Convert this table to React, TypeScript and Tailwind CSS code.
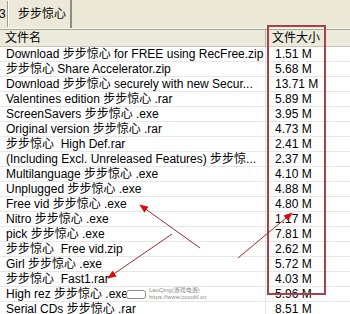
import React from "react";

const rows: [string, string][] = [
  ["Download 步步惊心 for FREE using RecFree.zip", "1.51 M"],
  ["步步惊心 Share Accelerator.zip", "5.68 M"],
  ["Download 步步惊心 securely with new Secur...", "13.71 M"],
  ["Valentines edition 步步惊心 .rar", "5.89 M"],
  ["ScreenSavers 步步惊心 .exe", "3.95 M"],
  ["Original version 步步惊心 .rar", "4.73 M"],
  ["步步惊心  High Def.rar", "2.41 M"],
  ["(Including Excl. Unreleased Features) 步步惊...", "2.37 M"],
  ["Multilanguage 步步惊心 .exe", "4.10 M"],
  ["Unplugged 步步惊心 .exe", "4.88 M"],
  ["Free vid 步步惊心 .exe", "4.80 M"],
  ["Nitro 步步惊心 .exe", "1.17 M"],
  ["pick 步步惊心 .exe", "7.81 M"],
  ["步步惊心  Free vid.zip", "2.62 M"],
  ["Girl 步步惊心 .exe", "5.72 M"],
  ["步步惊心  Fast1.rar", "4.03 M"],
  ["High rez 步步惊心 .exe", "5.96 M"],
  ["Serial CDs 步步惊心 .rar", "8.51 M"],
];

const Arrows: React.FC = () => (
  <svg className="absolute inset-0 pointer-events-none" width={350} height={314}>
    <defs>
      <marker id="head" viewBox="0 0 10 10" refX="9" refY="5" markerWidth="9" markerHeight="9" orient="auto">
        <path d="M0 1 L10 5 L0 9 Z" fill="#e00a0a" />
      </marker>
    </defs>
    <line x1={200} y1={248} x2={140} y2={205} stroke="#9c2a2a" strokeWidth={1} markerEnd="url(#head)" />
    <line x1={238} y1={258} x2={292} y2={213} stroke="#9c2a2a" strokeWidth={1} markerEnd="url(#head)" />
    <line x1={172} y1={234} x2={108} y2={278} stroke="#9c2a2a" strokeWidth={1} markerEnd="url(#head)" />
  </svg>
);

const App: React.FC = () => {
  return (
    <div className="relative w-[350px] h-[314px] overflow-hidden bg-white text-black font-['Liberation_Sans','Noto_Sans_CJK_SC',sans-serif] text-[12px]">
      {/* tab strip */}
      <div className="flex h-[29px] bg-[#ECE9D8] border-b border-[#F7F6F0]">
        <div className="w-[8px] h-[26px] mt-[1px] flex items-center overflow-hidden border-r border-[#9D9D92] text-[12px]">
          <span className="-ml-[1px]">3</span>
        </div>
        <div className="w-[64px] h-[28px] flex items-center pl-[9px] border-l border-white border-r-2 border-r-[#8E8D83] bg-[#ECE9D8]">
          步步惊心
        </div>
      </div>

      {/* column header */}
      <div className="flex h-[18px] bg-[#EBEADB] border-t border-[#A7A69A] border-b border-b-[#C9C6B6] leading-[16px]">
        <div className="w-[266px] pl-[5px] border-r border-[#B9B7A8]">文件名</div>
        <div className="pl-[6px]">文件大小</div>
      </div>

      {/* file rows */}
      <div className="flex flex-col">
        {rows.map(([name, size]) => (
          <div key={name} className="flex h-[15px] border-b border-[#E6E6E6] leading-[14px]">
            <div className="w-[266px] pl-[6px] whitespace-pre overflow-hidden border-r border-[#E6E6E6]">{name}</div>
            <div className="pl-[9px] whitespace-pre">{size}</div>
          </div>
        ))}
      </div>

      {/* red highlight box */}
      <div className="absolute left-[267px] top-[25px] w-[59px] h-[270px] border-2 border-[#A8404A]" />

      {/* watermark */}
      <div className="absolute left-[126px] top-[287px] flex items-center gap-[3px] bg-white/90 pr-[2px]">
        <div className="w-[20px] h-[9px] border border-[#8A8A8A] rounded-[3px]" />
        <div className="flex flex-col text-[6px] leading-[7px] text-[#8C8C8C]">
          <span>LaoQing(游戏电游)</span>
          <span>https://www.cocoltl.cn</span>
        </div>
      </div>

      <Arrows />
    </div>
  );
};

export default App;
